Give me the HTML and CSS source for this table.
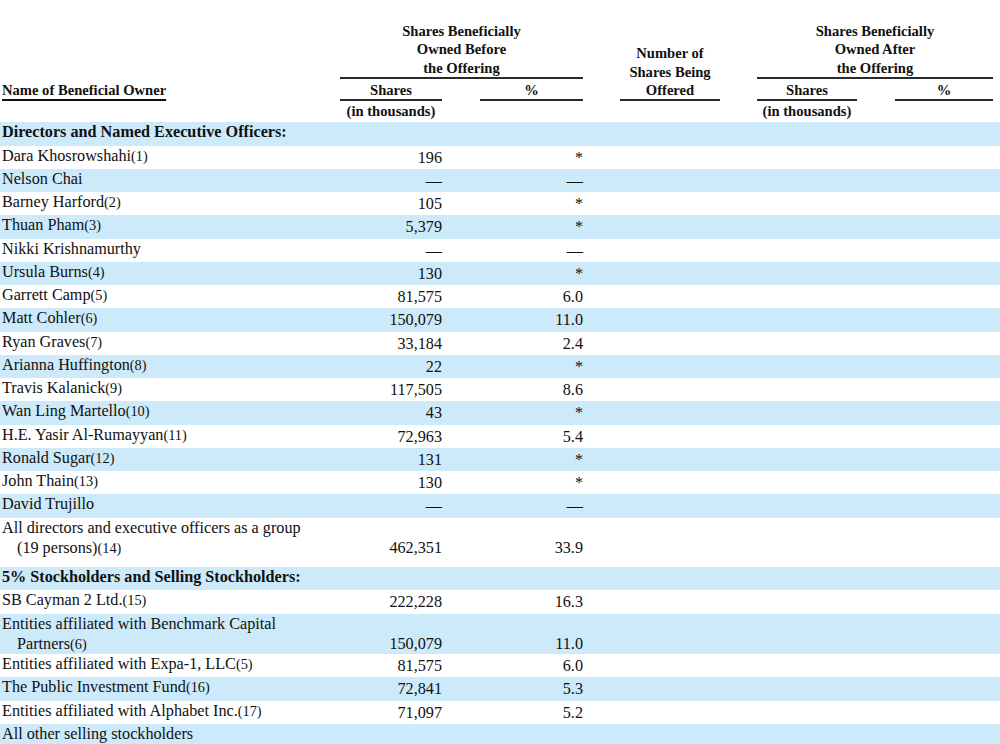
FILE: index.html
```html
<!DOCTYPE html>
<html lang="en">
<head>
<meta charset="utf-8">
<title>Beneficial Ownership</title>
<link rel="stylesheet" href="styles.css">
</head>
<body>
<div class="table">
  <div class="head">
    <div class="h-name"><span class="ul">Name of Beneficial Owner</span></div>
    <div class="h-group before">Shares Beneficially<br>Owned Before<br>the Offering</div>
    <div class="h-sub c2">Shares</div>
    <div class="h-sub c4">%</div>
    <div class="h-offered">Number of<br>Shares Being<br>Offered</div>
    <div class="h-group after">Shares Beneficially<br>Owned After<br>the Offering</div>
    <div class="h-sub c8">Shares</div>
    <div class="h-sub c10">%</div>
    <div class="h-note c2">(in thousands)</div>
    <div class="h-note c8">(in thousands)</div>
  </div>

  <div class="body">
    <div class="row section"><div class="name">Directors and Named Executive Officers:</div></div>
    <div class="row"><div class="name">Dara Khosrowshahi<span class="fn">(1)</span></div><div class="num">196</div><div class="pct">*</div></div>
    <div class="row"><div class="name">Nelson Chai</div><div class="num">—</div><div class="pct">—</div></div>
    <div class="row"><div class="name">Barney Harford<span class="fn">(2)</span></div><div class="num">105</div><div class="pct">*</div></div>
    <div class="row"><div class="name">Thuan Pham<span class="fn">(3)</span></div><div class="num">5,379</div><div class="pct">*</div></div>
    <div class="row"><div class="name">Nikki Krishnamurthy</div><div class="num">—</div><div class="pct">—</div></div>
    <div class="row"><div class="name">Ursula Burns<span class="fn">(4)</span></div><div class="num">130</div><div class="pct">*</div></div>
    <div class="row"><div class="name">Garrett Camp<span class="fn">(5)</span></div><div class="num">81,575</div><div class="pct">6.0</div></div>
    <div class="row"><div class="name">Matt Cohler<span class="fn">(6)</span></div><div class="num">150,079</div><div class="pct">11.0</div></div>
    <div class="row"><div class="name">Ryan Graves<span class="fn">(7)</span></div><div class="num">33,184</div><div class="pct">2.4</div></div>
    <div class="row"><div class="name">Arianna Huffington<span class="fn">(8)</span></div><div class="num">22</div><div class="pct">*</div></div>
    <div class="row"><div class="name">Travis Kalanick<span class="fn">(9)</span></div><div class="num">117,505</div><div class="pct">8.6</div></div>
    <div class="row"><div class="name">Wan Ling Martello<span class="fn">(10)</span></div><div class="num">43</div><div class="pct">*</div></div>
    <div class="row"><div class="name">H.E. Yasir Al-Rumayyan<span class="fn">(11)</span></div><div class="num">72,963</div><div class="pct">5.4</div></div>
    <div class="row"><div class="name">Ronald Sugar<span class="fn">(12)</span></div><div class="num">131</div><div class="pct">*</div></div>
    <div class="row"><div class="name">John Thain<span class="fn">(13)</span></div><div class="num">130</div><div class="pct">*</div></div>
    <div class="row"><div class="name">David Trujillo</div><div class="num">—</div><div class="pct">—</div></div>
    <div class="row total"><div class="name"><span class="line">All directors and executive officers as a group</span><span class="line cont">(19 persons)<span class="fn">(14)</span></span></div><div class="num">462,351</div><div class="pct">33.9</div></div>
    <div class="row section"><div class="name">5% Stockholders and Selling Stockholders:</div></div>
    <div class="row"><div class="name">SB Cayman 2 Ltd.<span class="fn">(15)</span></div><div class="num">222,228</div><div class="pct">16.3</div></div>
    <div class="row multi"><div class="name"><span class="line">Entities affiliated with Benchmark Capital</span><span class="line cont">Partners<span class="fn">(6)</span></span></div><div class="num">150,079</div><div class="pct">11.0</div></div>
    <div class="row"><div class="name">Entities affiliated with Expa-1, LLC<span class="fn">(5)</span></div><div class="num">81,575</div><div class="pct">6.0</div></div>
    <div class="row"><div class="name">The Public Investment Fund<span class="fn">(16)</span></div><div class="num">72,841</div><div class="pct">5.3</div></div>
    <div class="row"><div class="name">Entities affiliated with Alphabet Inc.<span class="fn">(17)</span></div><div class="num">71,097</div><div class="pct">5.2</div></div>
    <div class="row"><div class="name">All other selling stockholders</div></div>
  </div>
</div>
</body>
</html>
```

FILE: styles.css
```css
html, body {
  margin: 0;
  padding: 0;
  background: #ffffff;
}

body {
  font-family: "Liberation Serif", "Times New Roman", serif;
  color: #111111;
}

.table {
  width: 1000px;
}

.head,
.row {
  display: grid;
  grid-template-columns: 340px 102px 38px 103px 37px 100px 37px 100px 38px 98px 1fr;
}

/* ---------- header ---------- */
.head {
  padding-top: 22px;
  font-weight: bold;
  font-size: 14.6px;
  line-height: 18.3px;
  text-align: center;
}

.h-name {
  grid-column: 1;
  grid-row: 2;
  text-align: left;
  padding: 2px 0 0 2px;
}

.ul {
  text-decoration: underline;
  text-decoration-thickness: 1.5px;
  text-underline-offset: 4px;
}

.h-group {
  grid-row: 1;
  border-bottom: 2px solid #2a2a2a;
}

.h-group.before { grid-column: 2 / 5; }
.h-group.after  { grid-column: 8 / 11; }

.h-sub {
  grid-row: 2;
  padding-top: 2px;
  border-bottom: 2px solid #2a2a2a;
}

.h-offered {
  grid-column: 6;
  grid-row: 1 / 3;
  align-self: end;
  border-bottom: 2px solid #2a2a2a;
}

.h-note {
  grid-row: 3;
  padding: 1px 0 2px;
}

.c2  { grid-column: 2; }
.c4  { grid-column: 4; }
.c8  { grid-column: 8; }
.c10 { grid-column: 10; }

/* ---------- body ---------- */
.body {
  font-size: 16.2px;
  line-height: 20.25px;
}

.row:nth-child(odd) {
  background: #cdeafa;
}

.name {
  grid-column: 1;
  padding: 0 0 3px 2px;
}

.line {
  display: block;
}

.line.cont {
  padding-left: 15px;
}

.section .name {
  font-weight: bold;
  grid-column: 1 / 6;
}

.fn {
  font-size: 14.3px;
}

.num,
.pct {
  align-self: end;
  text-align: right;
  padding-bottom: 1px;
}

.num { grid-column: 2; }
.pct { grid-column: 4; }

.row.multi .name {
  padding-top: 0;
  padding-bottom: 0;
}

.row.multi .num,
.row.multi .pct {
  padding-bottom: 0;
}

.row.total .name {
  padding-top: 0;
  padding-bottom: 9px;
}

.row.total .num,
.row.total .pct {
  padding-bottom: 9px;
}
```
